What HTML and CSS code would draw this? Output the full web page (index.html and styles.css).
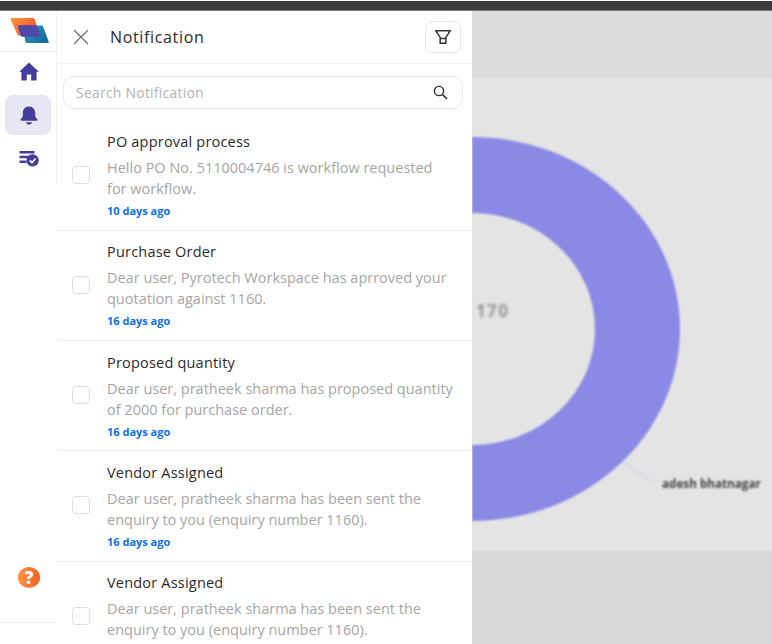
FILE: index.html
```html
<!DOCTYPE html>
<html lang="en">
<head>
<meta charset="utf-8">
<title>Notification</title>
<link rel="stylesheet" href="styles.css">
</head>
<body>
<div class="topbar"></div>
<div class="app">
  <nav class="rail">
    <div class="logo">
      <svg width="40" height="27" viewBox="0 0 40 27">
        <defs>
          <linearGradient id="lg1" x1="0" y1="0" x2="1" y2="0.4"><stop offset="0" stop-color="#ff9240"/><stop offset="1" stop-color="#f2552b"/></linearGradient>
          <linearGradient id="lg2" x1="0" y1="0" x2="1" y2="0.6"><stop offset="0" stop-color="#2aa5c9"/><stop offset="1" stop-color="#176c9c"/></linearGradient>
        </defs>
        <path d="M2.5 2H24.5L29.5 17.5H9.5Z" fill="url(#lg1)" stroke="url(#lg1)" stroke-width="2" stroke-linejoin="round"/>
        <path d="M14 9.5H33L38.8 25H17.5Z" fill="url(#lg2)" stroke="url(#lg2)" stroke-width="2" stroke-linejoin="round"/>
        <path d="M10 9.5H27L30.2 18.5H13Z" fill="#5147a8" stroke="#5147a8" stroke-width="2.4" stroke-linejoin="round"/>
      </svg>
    </div>
    <a class="rail-btn home">
      <svg width="20" height="19" viewBox="0 0 20 19"><path d="M10 0.5L19.5 9.6L17.6 10.2V18.5H12.2V12.5H7.8V18.5H2.4V10.2L0.5 9.6Z" fill="#443d9c"/></svg>
    </a>
    <a class="rail-btn active">
      <svg width="18" height="19" viewBox="0 0 18 19"><path d="M9 0.5C13 0.5 15.2 3.5 15.2 7.5V10.5L17.4 13.6C17.7 14.2 17.4 14.8 16.6 14.8H1.4C0.6 14.8 0.3 14.2 0.6 13.6L2.8 10.5V7.5C2.8 3.5 5 0.5 9 0.5Z" fill="#443d9c"/><path d="M6 16.2H12C11.6 17.8 10.5 18.5 9 18.5S6.4 17.8 6 16.2Z" fill="#443d9c"/></svg>
    </a>
    <a class="rail-btn tasks">
      <svg width="20" height="17" viewBox="0 0 20 17"><path d="M0.5 1H15.5V3.4H0.5ZM0.5 5.8H11.5V8.2H0.5ZM0.5 10.6H7.5V13H0.5Z" fill="#443d9c"/><circle cx="13.6" cy="10.4" r="6.2" fill="#443d9c"/><path d="M10.8 10.4L13 12.6L16.6 8.6" fill="none" stroke="#fff" stroke-width="1.5"/></svg>
    </a>
    <div class="rail-foot">
      <svg width="22" height="21" viewBox="0 0 22 21">
        <defs><linearGradient id="hg" x1="0" y1="0" x2="1" y2="0"><stop offset="0" stop-color="#ff9440"/><stop offset="1" stop-color="#f4602a"/></linearGradient></defs>
        <ellipse cx="11" cy="10.5" rx="11" ry="10.5" fill="url(#hg)"/>
        <text x="11" y="16.5" class="help-mark" text-anchor="middle">?</text>
      </svg>
    </div>
  </nav>

  <section class="panel">
    <header class="panel-head">
      <div class="head-left">
        <svg class="close" width="16" height="16" viewBox="0 0 16 16"><path d="M1 1L15 15M15 1L1 15" stroke="#6f6f6f" stroke-width="1.3" fill="none"/></svg>
        <h1 class="panel-title">Notification</h1>
      </div>
      <button class="filter-btn">
        <svg width="16" height="14" viewBox="0 0 16 14"><path d="M0.8 0.8H15.2L10.8 7.4V13.2H5.2V7.4ZM5.2 8.6H10.8" fill="none" stroke="#333" stroke-width="1.5"/></svg>
      </button>
    </header>
    <div class="search">
      <span class="search-ph">Search Notification</span>
      <svg width="15" height="15" viewBox="0 0 15 15"><circle cx="6" cy="6" r="4.6" fill="none" stroke="#2c2c2c" stroke-width="1.4"/><path d="M9.5 9.5L14 14" stroke="#2c2c2c" stroke-width="1.6"/></svg>
    </div>
    <ul class="list">
      <li class="item">
        <span class="check"></span>
        <div class="body">
          <h2 class="item-title">PO approval process</h2>
          <p class="item-text">Hello PO No. 5110004746 is workflow requested for workflow.</p>
          <time class="item-time">10 days ago</time>
        </div>
      </li>
      <li class="item">
        <span class="check"></span>
        <div class="body">
          <h2 class="item-title">Purchase Order</h2>
          <p class="item-text">Dear user, Pyrotech Workspace has aprroved your quotation against 1160.</p>
          <time class="item-time">16 days ago</time>
        </div>
      </li>
      <li class="item">
        <span class="check"></span>
        <div class="body">
          <h2 class="item-title">Proposed quantity</h2>
          <p class="item-text">Dear user, pratheek sharma has proposed quantity of 2000 for purchase order.</p>
          <time class="item-time">16 days ago</time>
        </div>
      </li>
      <li class="item">
        <span class="check"></span>
        <div class="body">
          <h2 class="item-title">Vendor Assigned</h2>
          <p class="item-text">Dear user, pratheek sharma has been sent the enquiry to you (enquiry number 1160).</p>
          <time class="item-time">16 days ago</time>
        </div>
      </li>
      <li class="item">
        <span class="check"></span>
        <div class="body">
          <h2 class="item-title">Vendor Assigned</h2>
          <p class="item-text">Dear user, pratheek sharma has been sent the enquiry to you (enquiry number 1160).</p>
        </div>
      </li>
    </ul>
  </section>

  <main class="backdrop">
    <div class="band-top"></div>
    <div class="band-mid">
      <svg class="chart" width="300" height="473" viewBox="0 0 300 473">
        <ellipse cx="0" cy="251" rx="208" ry="192" fill="#8a8ae6"/>
        <ellipse cx="0" cy="251" rx="123" ry="116" fill="#e4e4e4"/>
        <path d="M151 384L180 404" stroke="#cfcfee" stroke-width="1.2" fill="none"/>
      </svg>
      <span class="blur-num">170</span>
      <span class="blur-name">adesh bhatnagar</span>
    </div>
    <div class="band-bottom"></div>
  </main>
</div>
</body>
</html>
```
FILE: styles.css
```css
* { box-sizing: border-box; }
html, body { margin: 0; padding: 0; height: 100%; overflow: hidden; background: #fff; }
body { font-family: "Open Sans", "Noto Sans", sans-serif; display: flex; flex-direction: column; width: 772px; height: 644px; }
.topbar { height: 11px; flex: none; background: #3b3b3b; border-top: 1px solid #fff; border-bottom: 1px solid #7a7a7a; }
.app { flex: 1; display: flex; min-height: 0; }

.rail { width: 57px; flex: none; padding-right: 1px; display: flex; flex-direction: column; align-items: center; position: relative; background: #fff; }
.rail::after { content: ""; position: absolute; right: 0; top: 0; height: 172px; width: 1px; background: #f1f1f1; }
.logo { width: 100%; height: 41px; display: flex; justify-content: center; padding: 6px 0 0 1px; border-bottom: 1px solid #f1f1f1; }
.rail-btn { width: 46px; height: 40px; flex: none; display: flex; align-items: center; justify-content: center; border-radius: 8px; padding-left: 1px; }
.rail-btn.home { height: 38px; }
.rail-btn.active { margin-top: 5px; background: #e6e6f4; }
.rail-btn.tasks { margin-top: 3px; }
.rail-foot { margin-top: auto; width: 100%; height: 65px; margin-bottom: 21px; padding: 9px 0 0 2px; display: flex; justify-content: center; border-bottom: 1px solid #f1f1f1; }
.help-mark { font: 800 17px "Open Sans", sans-serif; fill: #fff; }

.panel { width: 415px; flex: none; background: #fff; display: flex; flex-direction: column; min-height: 0; overflow: hidden; }
.panel-head { height: 53px; flex: none; display: flex; align-items: center; justify-content: space-between; padding: 0 11px 0 16px; border-bottom: 1px solid #f3f3f3; }
.head-left { display: flex; align-items: center; gap: 21px; }
.panel-title { margin: 0; font-size: 16px; font-weight: 500; color: #2a2a2a; letter-spacing: 0.65px; }
.filter-btn { width: 36px; height: 32px; padding: 0; display: flex; align-items: center; justify-content: center; background: #fff; border: 1px solid #e4e4e4; border-radius: 7px; }
.search { margin: 12px 9px 0 6px; height: 33px; flex: none; display: flex; align-items: center; justify-content: space-between; padding: 0 14px 0 12px; border: 1px solid #e9e9e9; border-radius: 11px; }
.search-ph { font-size: 14px; color: #b3b3b3; letter-spacing: 0.22px; }

.list { list-style: none; margin: 0; padding: 0; flex: none; }
.item { height: 110.2px; display: flex; align-items: flex-start; padding: 0 0 0 15px; border-bottom: 1px solid #f0f0f0; }
.item:first-child { height: 122px; padding-top: 11.5px; }
.check { width: 18px; height: 18px; margin-top: 45px; flex: none; border: 1px solid #dedede; border-radius: 4px; }
.body { margin-left: 17px; width: 347px; padding-top: 10.4px; }
.item-title { margin: 0; font-size: 14.5px; line-height: 21px; font-weight: 500; color: #2a2a2a; letter-spacing: 0.2px; }
.item-text { margin: 5px 0 0; font-size: 14.5px; line-height: 21px; color: #a6a6a6; }
.item-time { display: block; margin-top: 5px; font-size: 11px; line-height: 14px; font-weight: 700; color: #0b6fe8; }

.backdrop { flex: 1; display: flex; flex-direction: column; min-width: 0; }
.band-top { height: 67px; flex: none; background: #dcdcdc; }
.band-mid { height: 473px; flex: none; position: relative; background: #e4e4e4; overflow: hidden; }
.band-bottom { flex: 1; background: #d8d8d8; }
.chart { display: block; filter: blur(0.8px); }
.blur-num { position: absolute; left: 4px; top: 221px; font-size: 17px; font-weight: 700; color: #959595; letter-spacing: 1.4px; filter: blur(1.4px); }
.blur-name { position: absolute; left: 190px; top: 397px; font-size: 11.7px; font-weight: 700; color: #444; filter: blur(1.1px); }
```
